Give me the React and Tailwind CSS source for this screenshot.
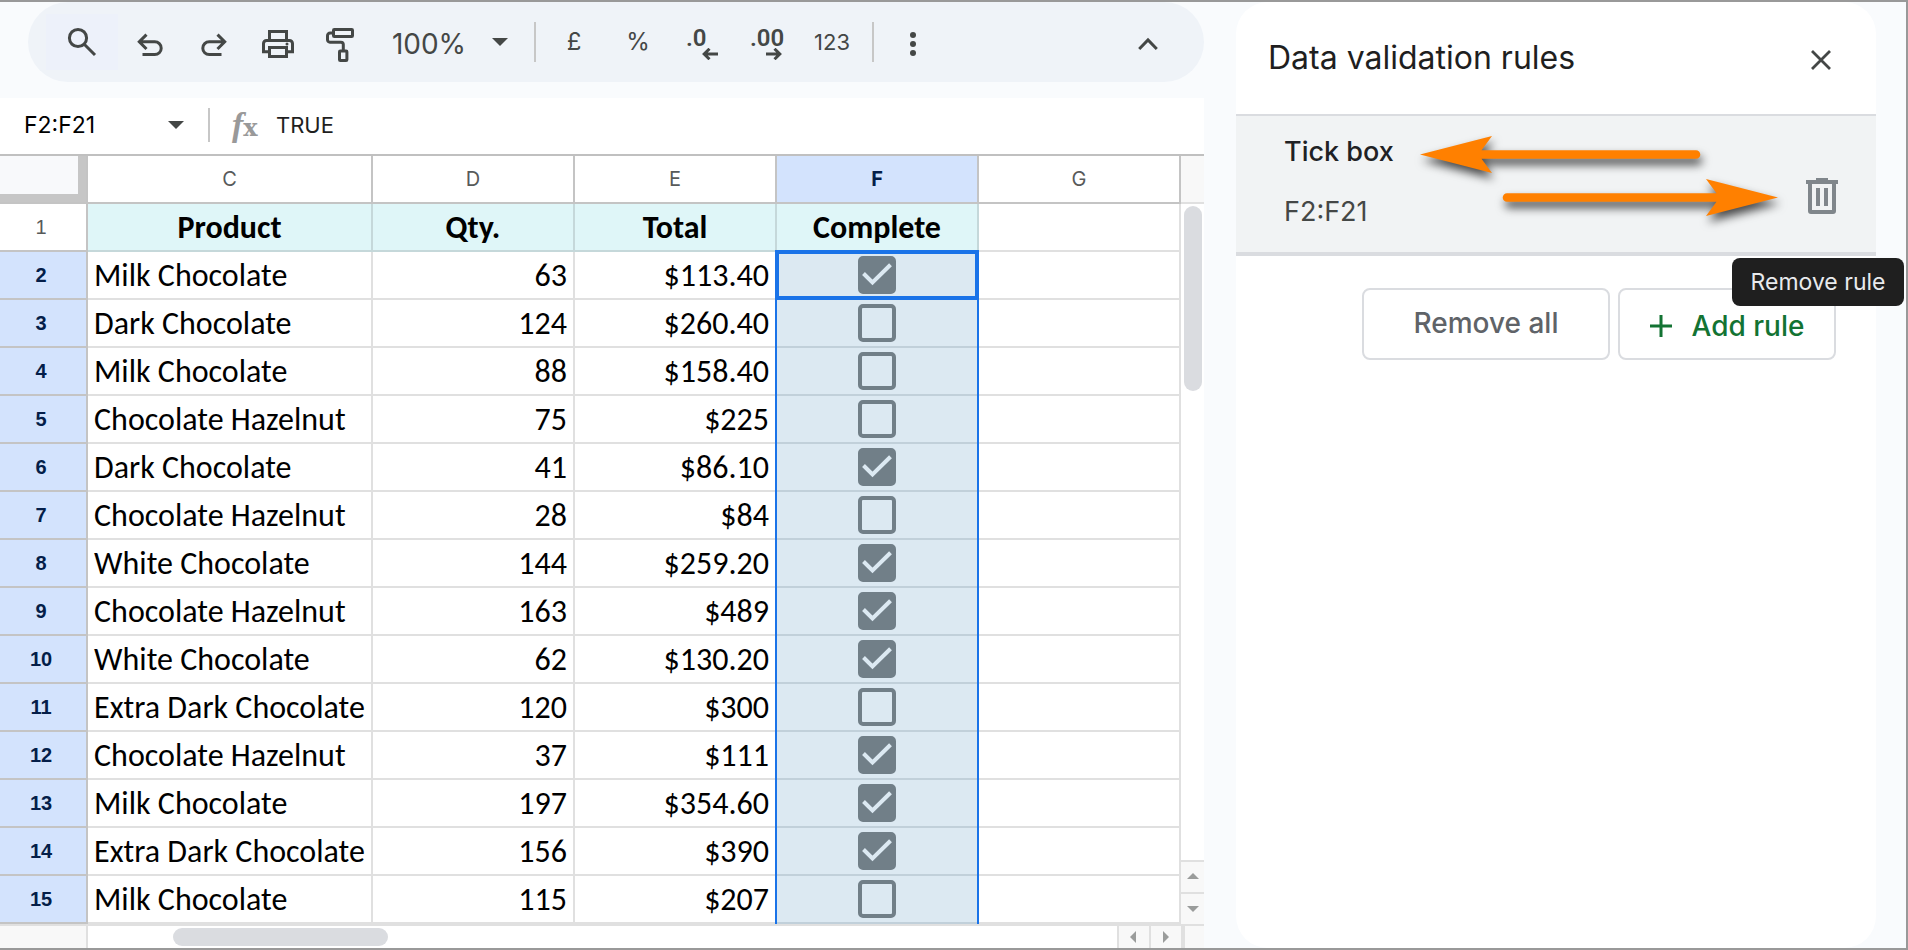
import React from "react";

const rows = [
  [2, "Milk Chocolate", "63", "$113.40", true],
  [3, "Dark Chocolate", "124", "$260.40", false],
  [4, "Milk Chocolate", "88", "$158.40", false],
  [5, "Chocolate Hazelnut", "75", "$225", false],
  [6, "Dark Chocolate", "41", "$86.10", true],
  [7, "Chocolate Hazelnut", "28", "$84", false],
  [8, "White Chocolate", "144", "$259.20", true],
  [9, "Chocolate Hazelnut", "163", "$489", true],
  [10, "White Chocolate", "62", "$130.20", true],
  [11, "Extra Dark Chocolate", "120", "$300", false],
  [12, "Chocolate Hazelnut", "37", "$111", true],
  [13, "Milk Chocolate", "197", "$354.60", true],
  [14, "Extra Dark Chocolate", "156", "$390", true],
  [15, "Milk Chocolate", "115", "$207", false],
];

function Icon({ children, width = 3 }) {
  return (
    <svg
      viewBox="0 0 40 40"
      className="h-10 w-10"
      fill="none"
      stroke="currentColor"
      strokeWidth={width}
      aria-hidden="true"
    >
      {children}
    </svg>
  );
}

function ToolButton({ label, className = "w-16", children }) {
  return (
    <button
      type="button"
      aria-label={label}
      className={`flex h-14 shrink-0 items-center justify-center ${className}`}
    >
      {children}
    </button>
  );
}

function Caret() {
  return (
    <svg viewBox="0 0 16 8" className="h-2 w-4 fill-[#444746]" aria-hidden="true">
      <path d="M0 0h16L8 8z" />
    </svg>
  );
}

function DecimalIcon({ digits, arrow }) {
  return (
    <span className="flex w-8 flex-col pt-1">
      <span className="text-left font-['Roboto',sans-serif] text-2xl/5 font-semibold">
        {digits}
      </span>
      <svg
        viewBox="0 0 16 12"
        className="h-3 w-4 self-end"
        fill="none"
        stroke="currentColor"
        strokeWidth="3"
        aria-hidden="true"
      >
        <path d={arrow} />
      </svg>
    </span>
  );
}

function Toolbar() {
  return (
    <div
      role="toolbar"
      aria-label="Main"
      className="ml-7 flex h-20 items-center rounded-full bg-[#eff3f8] pr-6 pl-[18px] text-[#444746]"
    >
      <ToolButton label="Search menus" className="w-[72px] bg-[#edf1fa]">
        <Icon>
          <circle cx="16" cy="16" r="8.6" />
          <path d="M22 22l11 11" />
        </Icon>
      </ToolButton>
      <ToolButton label="Undo">
        <Icon>
          <path d="M9.5 19.8H24.8a6.3 6.3 0 0 1 0 12.8H12.5M16.5 12.6L9.3 19.8l7.2 7.2" />
        </Icon>
      </ToolButton>
      <ToolButton label="Redo">
        <Icon>
          <path d="M30.5 19.8H15.2a6.3 6.3 0 0 0 0 12.8H27.5M23.5 12.6l7.2 7.2-7.2 7.2" />
        </Icon>
      </ToolButton>
      <ToolButton label="Print">
        <Icon>
          <path d="M11.5 17.5v-8h17v8" />
          <path d="M11 29.8H5.5V21.5a3 3 0 0 1 3-3h23a3 3 0 0 1 3 3v8.3H29" />
          <path d="M11.5 25.5h17v9h-17z" />
          <circle cx="29" cy="22" r="1.5" fill="currentColor" stroke="none" />
        </Icon>
      </ToolButton>
      <ToolButton label="Paint format">
        <Icon>
          <rect x="11.5" y="7.5" width="19" height="7" rx="0.8" />
          <path d="M11 11H8.2a2.7 2.7 0 0 0-2.7 2.7v4.1a2.4 2.4 0 0 0 2.4 2.4h11a2.4 2.4 0 0 1 2.4 2.4v6" />
          <rect x="17.5" y="29" width="7.4" height="9.5" rx="0.8" />
        </Icon>
      </ToolButton>
      <span className="w-[110px] shrink-0 pt-1 text-center text-[28px]">100%</span>
      <ToolButton label="Zoom" className="w-[31px]">
        <Caret />
      </ToolButton>
      <span className="ml-[19px] h-10 w-0.5 shrink-0 bg-[#c7c7c7]" />
      <ToolButton label="Format as currency" className="ml-1.5 w-16 text-2xl">
        £
      </ToolButton>
      <ToolButton label="Format as percent" className="w-16 text-2xl">
        %
      </ToolButton>
      <ToolButton label="Decrease decimal places">
        <DecimalIcon digits=".0" arrow="M16 6H2M7.5 .8L2.2 6l5.3 5.2" />
      </ToolButton>
      <ToolButton label="Increase decimal places">
        <DecimalIcon digits=".00" arrow="M0 6h14M8.5 .8L13.8 6l-5.3 5.2" />
      </ToolButton>
      <ToolButton label="More formats" className="w-[68px] text-[22px]">
        123
      </ToolButton>
      <span className="mx-1.5 h-10 w-0.5 shrink-0 bg-[#c7c7c7]" />
      <ToolButton label="More">
        <Icon>
          <g fill="currentColor" stroke="none">
            <circle cx="21" cy="13" r="3" />
            <circle cx="21" cy="22" r="3" />
            <circle cx="21" cy="31" r="3" />
          </g>
        </Icon>
      </ToolButton>
      <ToolButton label="Hide the menus" className="ml-auto w-16">
        <Icon>
          <path d="M11.2 27L20 18l8.8 9" />
        </Icon>
      </ToolButton>
    </div>
  );
}

function FormulaBar() {
  return (
    <div className="mt-4 flex h-[58px] items-center border-b-2 border-[#c0c0c0] bg-white pb-0.5 text-[22px]">
      <input
        aria-label="Name box"
        defaultValue="F2:F21"
        className="w-36 bg-transparent pl-6 text-[23px] text-black outline-none"
      />
      <button
        type="button"
        aria-label="Named ranges"
        className="flex h-10 w-16 items-center justify-center"
      >
        <Caret />
      </button>
      <span className="h-[34px] w-0.5 bg-[#c7c7c7]" />
      <label
        htmlFor="formula"
        aria-label="Formula"
        className="ml-[22px] w-11 pt-1 text-[#999999]"
      >
        <span className="font-['Liberation_Serif',serif] text-[34px]/8 font-bold italic">f</span>
        <span className="font-['DejaVu_Serif',serif] text-2xl/8 font-bold">x</span>
      </label>
      <input
        id="formula"
        defaultValue="TRUE"
        className="min-w-0 flex-1 bg-transparent text-[#1f1f1f] outline-none"
      />
    </div>
  );
}

function TickCell({ row, checked }) {
  return (
    <span className="relative mx-auto block h-[38px] w-[38px]">
      <input
        type="checkbox"
        aria-label={`Complete, row ${row}`}
        defaultChecked={checked}
        className="peer block h-[38px] w-[38px] appearance-none rounded-[5px] border-4 border-[#717f88] checked:bg-[#717f88]"
      />
      <svg
        viewBox="0 0 38 38"
        className="pointer-events-none absolute inset-0 hidden h-[38px] w-[38px] peer-checked:block"
        fill="none"
        stroke="#dce9f2"
        strokeWidth="4"
        aria-hidden="true"
      >
        <path d="M5.5 17.5l9 9L32.5 8.8" />
      </svg>
    </span>
  );
}

function Sheet() {
  const head = "border-r-2 border-b-2 border-[#c4c4c4] font-normal";
  const title =
    "border-r-2 border-b-2 border-[#c5d8da] bg-[#dff6f8] p-0 pt-0.5 text-center font-bold";
  const cell = "border-r-2 border-b-2 border-[#e0e0e0]";
  return (
    <table className="w-full table-fixed border-separate border-spacing-0 bg-white">
      <colgroup>
        <col className="w-[88px]" />
        <col className="w-[285px]" />
        <col className="w-[202px]" />
        <col className="w-[202px]" />
        <col className="w-[202px]" />
        <col />
      </colgroup>
      <thead>
        <tr className="h-12 text-xl text-[#575a5a]">
          <th className={`${head} p-0`}>
            <div className="h-[46px] border-r-8 border-b-8 border-[#c6c6c6] bg-[#f8f9fb]" />
          </th>
          <th className={head}>C</th>
          <th className={head}>D</th>
          <th className={head}>E</th>
          <th className="border-r-2 border-b-2 border-[#c4c4c4] bg-[#d3e3fd] font-bold text-[#041e49]">
            F
          </th>
          <th className={head}>G</th>
        </tr>
      </thead>
      <tbody className="font-['Carlito','Lato',sans-serif] text-[32px]/[44px] text-black">
        <tr className="h-12">
          <th
            scope="row"
            className={`${head} p-0 pr-1 font-['Liberation_Sans',sans-serif] text-xl text-[#575a5a]`}
          >
            1
          </th>
          <td className={title}>Product</td>
          <td className={title}>Qty.</td>
          <td className={title}>Total</td>
          <td className={title}>Complete</td>
          <td className={cell} />
        </tr>
        {rows.map(([n, product, qty, total, done]) => (
          <tr key={n} className="h-12">
            <th
              scope="row"
              className="border-r-2 border-b-2 border-[#c4c4c4] bg-[#d3e3fd] p-0 pr-1 font-['Liberation_Sans',sans-serif] text-xl font-bold text-[#041e49]"
            >
              {n}
            </th>
            <td className={`${cell} p-0 pt-0.5 pl-1.5 whitespace-nowrap`}>{product}</td>
            <td className={`${cell} p-0 pt-0.5 pr-1.5 text-right`}>{qty}</td>
            <td className={`${cell} p-0 pt-0.5 pr-1.5 text-right`}>{total}</td>
            <td className="relative border-r-2 border-b-2 border-[#c1d0da] bg-[#dce9f2] p-0">
              <span className="pointer-events-none absolute -inset-0.5 border-x-2 border-[#1a73e8]" />
              <TickCell row={n} checked={done} />
              {n === 2 && (
                <span className="pointer-events-none absolute -inset-0.5 border-4 border-[#1a73e8]" />
              )}
            </td>
            <td className={cell} />
          </tr>
        ))}
      </tbody>
    </table>
  );
}

function Triangle({ d }) {
  return (
    <svg viewBox="0 0 12 12" className="h-3 w-3 fill-[#9a9c9b]" aria-hidden="true">
      <path d={d} />
    </svg>
  );
}

function VerticalScroll() {
  return (
    <div className="flex w-[23px] flex-col bg-white">
      <div className="h-12 border-b-2 border-[#e0e0e0] bg-[#f8f8f8]" />
      <div className="flex-1 p-0.5 pl-[3px]">
        <div className="h-[185px] rounded-full bg-[#dadce0]" />
      </div>
      <button
        type="button"
        aria-label="Scroll up"
        className="flex h-8 items-center justify-center border-t-2 border-[#e0e0e0] bg-[#f8f8f8]"
      >
        <Triangle d="M6 2l6 6H0z" />
      </button>
      <button
        type="button"
        aria-label="Scroll down"
        className="flex h-8 items-center justify-center border-t-2 border-[#e0e0e0] bg-[#f8f8f8]"
      >
        <Triangle d="M0 3h12L6 9z" />
      </button>
    </div>
  );
}

function HorizontalScroll() {
  return (
    <div className="flex h-6 flex-1 border-t-2 border-[#e0e0e0] bg-white">
      <div className="w-[88px] border-r-2 border-[#e0e0e0] bg-[#f8f8f8]" />
      <div className="flex-1 py-0.5 pl-[85px]">
        <div className="h-[18px] w-[215px] rounded-full bg-[#dadce0]" />
      </div>
      <button
        type="button"
        aria-label="Scroll left"
        className="flex w-8 items-center justify-center border-l-2 border-[#e0e0e0] bg-[#f8f8f8]"
      >
        <Triangle d="M8 0v12L2 6z" />
      </button>
      <button
        type="button"
        aria-label="Scroll right"
        className="flex w-8 items-center justify-center border-l-2 border-[#e0e0e0] bg-[#f8f8f8]"
      >
        <Triangle d="M3 0v12l6-6z" />
      </button>
      <div className="w-[23px] border-l-4 border-[#e0e0e0] bg-[#f8f8f8]" />
    </div>
  );
}

function RulesPanel() {
  return (
    <aside className="mr-[30px] ml-8 w-[640px] shrink-0 rounded-[32px] bg-white">
      <header className="flex h-28 items-center justify-between pr-[39px] pl-8">
        <h1 className="text-[32px] text-[#1f1f1f]">Data validation rules</h1>
        <button
          type="button"
          aria-label="Close"
          className="flex h-8 w-8 items-end justify-center text-[#444746]"
        >
          <svg
            viewBox="0 0 20 20"
            className="mb-1 h-5 w-5"
            stroke="currentColor"
            strokeWidth="2.8"
            aria-hidden="true"
          >
            <path d="M1 1l18 18M19 1L1 19" />
          </svg>
        </button>
      </header>

      <section className="relative flex h-[142px] justify-between border-t-2 border-b-4 border-[#dadce0] bg-[#f1f3f4] pr-[38px] pl-12">
        <div className="flex flex-col gap-7 pt-5 text-[27px]/8">
          <p className="font-medium text-[#202124]">Tick box</p>
          <p className="text-[#444746]">F2:F21</p>
        </div>
        <button type="button" aria-label="Remove rule" className="mt-6 h-9 w-8 self-center">
          <svg viewBox="0 0 32 36" className="h-9 w-8" fill="#80868b" aria-hidden="true">
            <path d="M10 0h12v2h10v4H0V2h10z" />
            <path d="M2 5h28v28a3 3 0 0 1-3 3H5a3 3 0 0 1-3-3zM6 6v26h20V6z" fillRule="evenodd" />
            <path d="M10 10h4v18h-4zM18 10h4v18h-4z" />
          </svg>
        </button>
        <svg
          viewBox="0 0 380 136"
          className="pointer-events-none absolute top-0 left-[176px] h-[136px] w-[380px] overflow-visible drop-shadow-[2px_6px_5px_rgba(0,0,0,0.7)]"
          fill="#ff8000"
          aria-hidden="true"
        >
          <path d="M8 38.5L80 20 69.5 34.2H284a4.3 4.3 0 0 1 0 8.6H69.5L80 57z" />
          <path d="M366 81.5L294 63 304.5 77.2H95a4.3 4.3 0 0 0 0 8.6H304.5L294 100z" />
        </svg>
        <span
          role="tooltip"
          className="absolute top-[142px] -right-7 z-10 flex h-12 w-[172px] items-center justify-center rounded-lg bg-[#1f1f1f] text-[23px] whitespace-nowrap text-[#e8eaed]"
        >
          Remove rule
        </span>
      </section>

      <div className="flex justify-end gap-2 pt-8 pr-10 text-[28px] font-medium">
        <button
          type="button"
          className="h-[72px] w-[248px] rounded-lg border-2 border-[#dadce0] pb-0.5 text-[#5f6368]"
        >
          Remove all
        </button>
        <button
          type="button"
          className="flex h-[72px] w-[218px] items-center justify-center gap-5 rounded-lg border-2 border-[#dadce0] pt-1 text-[#137333]"
        >
          <svg
            viewBox="0 0 22 22"
            className="h-[22px] w-[22px]"
            stroke="currentColor"
            strokeWidth="3"
            aria-hidden="true"
          >
            <path d="M11 0v22M0 11h22" />
          </svg>
          Add rule
        </button>
      </div>
    </aside>
  );
}

export default function App() {
  return (
    <div className="flex min-h-screen border-t-2 border-r-2 border-b-2 border-[#999999] bg-[#f9fbfd] font-['Inter',sans-serif]">
      <main className="flex min-w-0 flex-1 flex-col">
        <Toolbar />
        <FormulaBar />
        <div className="flex">
          <div className="min-w-0 flex-1">
            <Sheet />
          </div>
          <VerticalScroll />
        </div>
        <HorizontalScroll />
      </main>
      <RulesPanel />
    </div>
  );
}
